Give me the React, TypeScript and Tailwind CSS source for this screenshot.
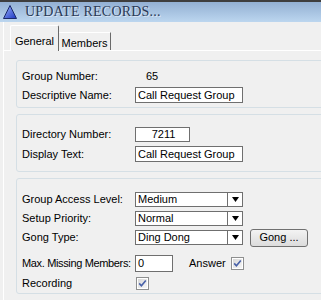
import React from "react";

const Field: React.FC<{ className: string; children?: React.ReactNode }> = ({
	className,
	children,
}) => (
	<div
		className={`bg-white border border-[#6f6f6f] flex items-center pl-[2px] leading-[13px] ${className}`}
	>
		{children}
	</div>
);

const Select: React.FC<{ value: string }> = ({ value }) => (
	<div className="w-[108px] h-[15px] bg-white border border-[#6f6f6f] flex items-stretch">
		<div className="flex-1 flex items-center pl-[2px] leading-[13px]">{value}</div>
		<div className="w-[15px] border-l border-[#6f6f6f] flex items-center justify-center">
			<svg width="7" height="5" viewBox="0 0 7 5">
				<polygon points="0,0 7,0 3.5,5" fill="#000" />
			</svg>
		</div>
	</div>
);

const Check: React.FC = () => (
	<svg width="13" height="13" viewBox="0 0 13 13">
		<defs>
			<linearGradient id="cbg" x1="0" y1="0" x2="1" y2="1">
				<stop offset="0" stopColor="#d8d8d8" />
				<stop offset="1" stopColor="#f6f6f6" />
			</linearGradient>
		</defs>
		<rect x="0.5" y="0.5" width="12" height="12" fill="#fff" stroke="#8e8f8f" />
		<rect x="2" y="2" width="9" height="9" fill="url(#cbg)" />
		<path d="M3.2 6.4 L5.4 8.8 L9.8 3.4" fill="none" stroke="#4861a8" strokeWidth="1.6" />
	</svg>
);

const Label: React.FC<{ children: React.ReactNode }> = ({ children }) => (
	<div className="w-[113px] shrink-0 whitespace-nowrap">{children}</div>
);

const App: React.FC = () => {
	return (
		<div className="w-[321px] h-[300px] overflow-hidden bg-[#f0f0f0] text-[11px] text-black font-['Liberation_Sans',Arial,sans-serif] flex flex-col">
			{/* title bar */}
			<div className="h-[2px] bg-[#3e3e3e] shrink-0" />
			<div className="h-[20px] shrink-0 bg-gradient-to-b from-[#93b0d3] to-[#bcd6ef] flex items-center pl-[3px] gap-[8px]">
				<svg width="14" height="14" viewBox="0 0 14 14">
					<defs>
						<linearGradient id="tri" x1="0" y1="0" x2="1" y2="1">
							<stop offset="0" stopColor="#9fb8ff" />
							<stop offset="1" stopColor="#1a34c0" />
						</linearGradient>
					</defs>
					<polygon points="7,0.5 13.5,13.5 0.5,13.5" fill="url(#tri)" stroke="#1b2a6b" strokeWidth="1" />
				</svg>
				<span className="font-['Liberation_Serif','Times_New_Roman',serif] text-[14px] leading-[16px] tracking-[0.2px] text-[#2a3956] [text-shadow:1px_1px_0_rgba(255,255,255,0.55)]">
					UPDATE RECORDS...
				</span>
			</div>

			<div className="flex-1 pl-[3px]">
				<div className="h-full border-l border-white">
					{/* tabs */}
					<div className="h-[28px] flex items-end pl-[6px]">
						<div className="relative z-10 -mb-[1px] h-[26px] w-[49px] bg-[#f0f0f0] border-l border-t border-white border-r border-r-[#6a6a6a] rounded-t-[2px] flex justify-center pt-[8px] leading-[14px] whitespace-nowrap">
							General
						</div>
						<div className="h-[18px] w-[52px] border-t border-white border-r border-r-[#6a6a6a] flex justify-center pt-[3px] leading-[14px] whitespace-nowrap">
							Members
						</div>
					</div>

					{/* panel */}
					<div className="border-t border-white pl-[12px] pt-[9px]">
						<div className="w-[330px] border border-[#d5dfe5] rounded-[3px] pl-[5px] pt-[5px] pb-[3px]">
							<div className="h-[20px] flex items-center">
								<Label>Group Number:</Label>
								<div className="pl-[11px]">65</div>
							</div>
							<div className="h-[18px] flex items-center">
								<Label>Descriptive Name:</Label>
								<Field className="w-[108px] h-[16px]">Call Request Group</Field>
							</div>
						</div>

						<div className="mt-[6px] w-[330px] border border-[#d5dfe5] rounded-[3px] pl-[5px] pt-[9px] pb-[7px]">
							<div className="h-[20px] flex items-center">
								<Label>Directory Number:</Label>
								<Field className="w-[55px] h-[15px] justify-center">7211</Field>
							</div>
							<div className="h-[20px] flex items-center">
								<Label>Display Text:</Label>
								<Field className="w-[108px] h-[16px]">Call Request Group</Field>
							</div>
						</div>

						<div className="mt-[6px] w-[330px] border border-[#d5dfe5] rounded-[3px] pl-[5px] pt-[11px]">
							<div className="h-[19px] flex items-center">
								<Label>Group Access Level:</Label>
								<Select value="Medium" />
							</div>
							<div className="h-[19px] flex items-center">
								<Label>Setup Priority:</Label>
								<Select value="Normal" />
							</div>
							<div className="h-[19px] flex items-center">
								<Label>Gong Type:</Label>
								<Select value="Ding Dong" />
								<div className="ml-[7px] w-[58px] h-[18px] rounded-[3px] border border-[#707070] bg-gradient-to-b from-[#f3f3f3] to-[#dcdcdc] flex items-center justify-center leading-[13px]">
									Gong ...
								</div>
							</div>
							<div className="mt-[6px] h-[20px] flex items-center">
								<div className="w-[113px] shrink-0 whitespace-nowrap tracking-[-0.35px]">
									Max. Missing Members:
								</div>
								<Field className="w-[38px] h-[17px]">0</Field>
								<div className="ml-[16px]">Answer</div>
								<div className="ml-[5px] flex">
									<Check />
								</div>
							</div>
							<div className="h-[20px] flex items-center">
								<Label>Recording</Label>
								<div className="ml-[1px] flex">
									<Check />
								</div>
							</div>
						</div>
					</div>
				</div>
			</div>
		</div>
	);
};

export default App;
